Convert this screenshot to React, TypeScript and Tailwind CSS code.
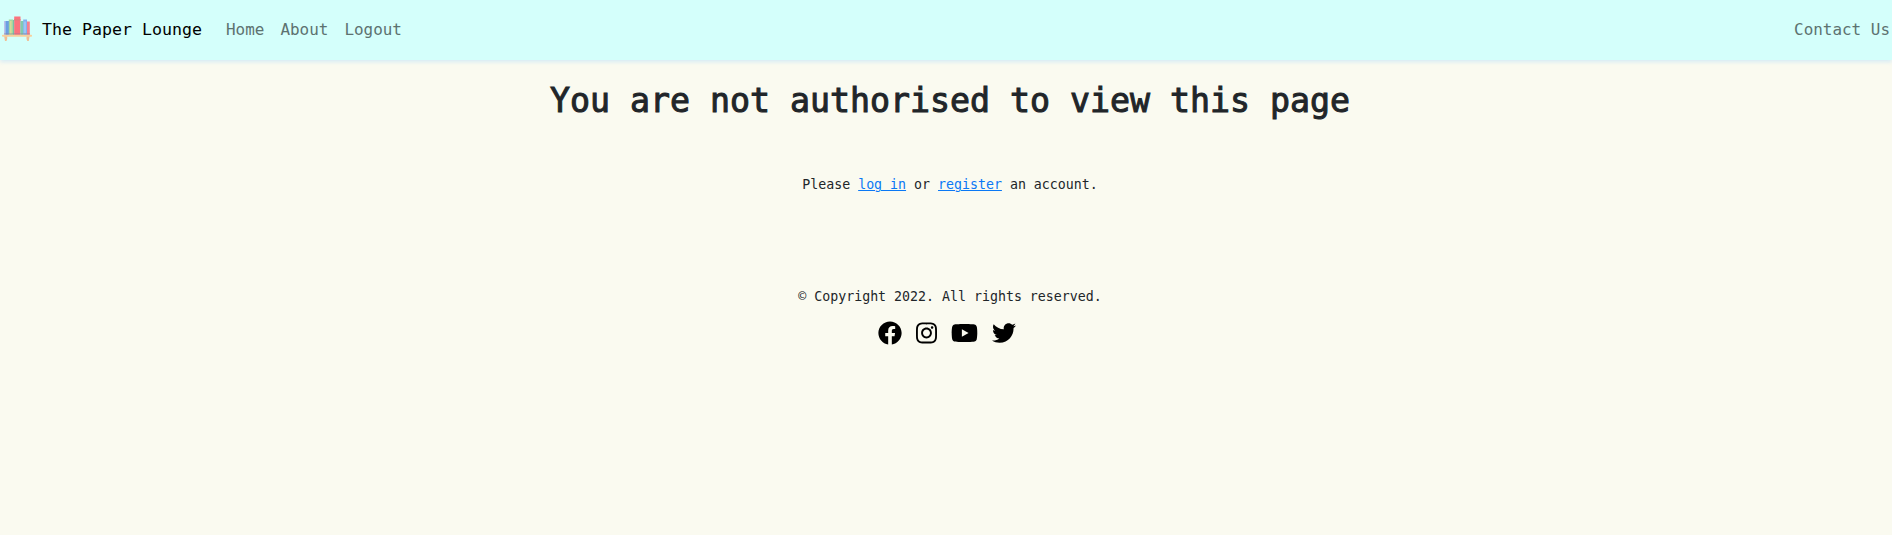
import type { ReactNode } from "react";
import { FaFacebook, FaInstagram, FaTwitter, FaYoutube } from "react-icons/fa";

function BookshelfLogo() {
  return (
    <svg className="mb-[2px] h-[26px] w-8 shrink-0" viewBox="0 0 32 26" aria-hidden="true">
      <rect x="4" y="5" width="1.7" height="14" fill="#bfc0ea" />
      <rect x="5.5" y="5" width="3.5" height="14" fill="#6a9fe2" />
      <rect x="8.8" y="3.5" width="4.4" height="15.5" fill="#a3d8a0" />
      <rect x="10" y="5" width="1.6" height="13" fill="#d5dc9b" />
      <rect x="13" y="4" width="1.4" height="15" fill="#7ac0a8" />
      <rect x="14.2" y="0.5" width="6.3" height="18.5" fill="#fb737e" />
      <rect x="14.2" y="3" width="6.3" height="1.6" fill="#e37f7b" />
      <rect x="20.4" y="5" width="3.2" height="14" fill="#7fcab0" />
      <rect x="23.2" y="3.5" width="3.8" height="15.5" fill="#82b1f0" />
      <rect x="24.3" y="5.5" width="1.4" height="12" fill="#a9cdf5" />
      <rect x="27" y="5.5" width="2.8" height="13.5" fill="#f5808f" />
      <rect x="4" y="17.2" width="26" height="1.3" fill="#8d7f9c" opacity="0.45" />
      <rect x="2" y="18.7" width="30" height="2" rx="0.8" fill="#f8d09c" />
      <path d="M4.200 20.500H7.200V23l-.7 2H5zM29.500 20.500h-3V23l.8 2h1.500z" fill="#f2bd92" />
    </svg>
  );
}

function NavLink({ children }: { children: ReactNode }) {
  return (
    <a href="#" className="pb-[2px] text-[15.946px] leading-[29px] text-[#5d7270]">
      {children}
    </a>
  );
}

function TextLink({ children }: { children: ReactNode }) {
  return (
    <a href="#" className="text-[#0a78f5] underline decoration-1 underline-offset-1">
      {children}
    </a>
  );
}

export default function App() {
  return (
    <div className="min-h-screen bg-[#fafaf0] font-['DejaVu_Sans_Mono',monospace] text-[#212529]">
      <nav className="flex h-[60px] items-center justify-between bg-[#d4fffb] pr-[2px] shadow-[0_2px_4px_rgba(160,215,255,0.4)]">
        <div className="flex items-center">
          <a href="#" className="mr-6 flex items-center gap-[10px] text-[16.61px] leading-[30px] text-black">
            <BookshelfLogo />
            The Paper Lounge
          </a>
          <div className="flex gap-4">
            <NavLink>Home</NavLink>
            <NavLink>About</NavLink>
            <NavLink>Logout</NavLink>
          </div>
        </div>
        <NavLink>Contact Us</NavLink>
      </nav>

      <main className="pl-2 text-center">
        <h1 className="pt-[17px] text-[33.22px] leading-[48px] [-webkit-text-stroke:1px_#212529]">
          You are not authorised to view this page
        </h1>
        <p className="mt-12 text-[13.288px] leading-6">
          Please <TextLink>log in</TextLink> or <TextLink>register</TextLink> an account.
        </p>
      </main>

      <footer className="mt-[88px] pl-2 text-center">
        <p className="text-[13.288px] leading-6">© Copyright 2022. All rights reserved.</p>
        <div className="mr-[6px] mt-3 flex items-center justify-center gap-[14px] text-black">
          <FaFacebook className="h-6 w-6" />
          <FaInstagram className="h-6 w-[21px]" />
          <FaYoutube className="h-6 w-[27px]" />
          <FaTwitter className="h-6 w-6" />
        </div>
      </footer>
    </div>
  );
}
